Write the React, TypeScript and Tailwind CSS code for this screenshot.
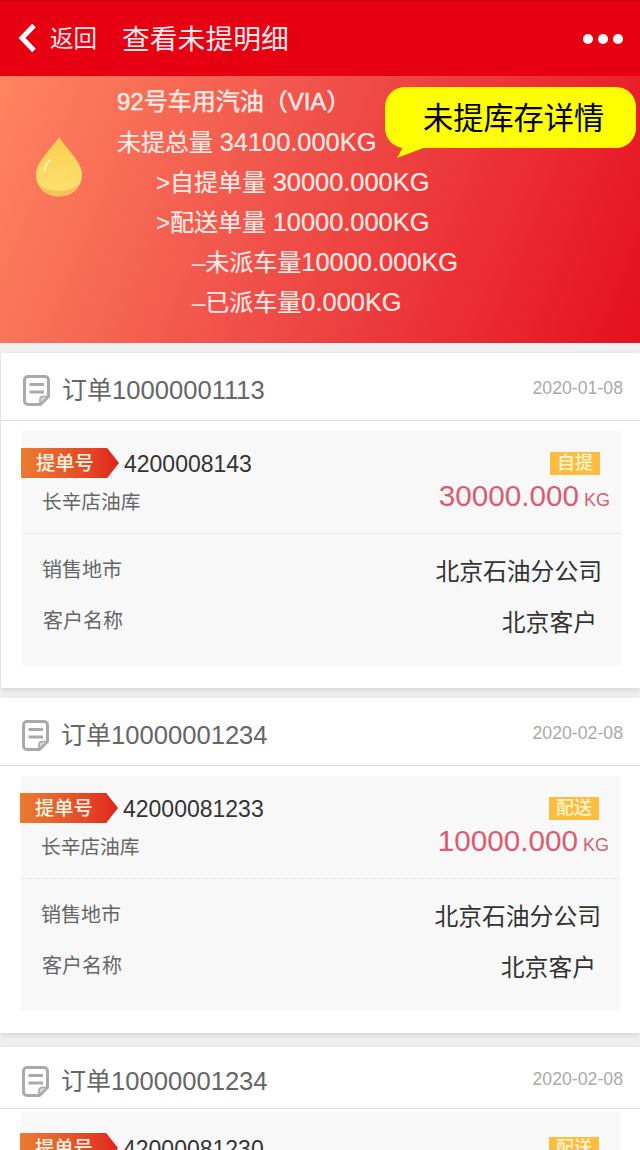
const sans = 'font-["Liberation_Sans","Noto_Sans_CJK_SC",sans-serif]'

type Order = {
  no: string
  date: string
  bill: string
  kind: string
  amount: string
  card: string
  head: string
  body: string
  billRow: string
  kindTop: string
}

const orders: Order[] = [
  {
    no: '10000001113',
    date: '2020-01-08',
    bill: '4200008143',
    kind: '自提',
    amount: '30000.000',
    card: 'ml-px mb-[10px]',
    head: 'h-[68px]',
    body: 'pt-[10px] pl-[21px]',
    billRow: 'pt-[17px]',
    kindTop: 'top-[21px]',
  },
  {
    no: '10000001234',
    date: '2020-02-08',
    bill: '42000081233',
    kind: '配送',
    amount: '10000.000',
    card: 'mb-[14px]',
    head: 'h-[68px]',
    body: 'pt-[10px] pl-[21px]',
    billRow: 'pt-[17px]',
    kindTop: 'top-[21px]',
  },
  {
    no: '10000001234',
    date: '2020-02-08',
    bill: '42000081230',
    kind: '配送',
    amount: '10000.000',
    card: '',
    head: 'h-[62px]',
    body: 'pt-[3px] pl-[21px]',
    billRow: 'pt-[21px]',
    kindTop: 'top-[25px]',
  },
]

function DocIcon() {
  return (
    <svg width="27" height="31" viewBox="0 0 27 31" fill="none">
      <path
        d="M5 1.500h17a3.500 3.500 0 0 1 3.500 3.500v16.500l-8 8H5A3.500 3.500 0 0 1 1.500 26V5A3.500 3.500 0 0 1 5 1.500z"
        stroke="#aaaaaa"
        strokeWidth="3"
        strokeLinejoin="round"
      />
      <path d="M6.500 9.500h14.500M6.500 17h14.500" stroke="#aaaaaa" strokeWidth="2.800" />
      <path d="M17 29v-4.500a3 3 0 0 1 3-3h5.500z" fill="#d8d8d8" stroke="#aaaaaa" strokeWidth="1.600" />
    </svg>
  )
}

function OilDrop() {
  return (
    <svg width="48" height="61" viewBox="0 0 48 61">
      <defs>
        <linearGradient id="drop" x1="0" y1="0" x2="0" y2="1">
          <stop offset="0" stopColor="#fbce4f" />
          <stop offset="1" stopColor="#fde26f" />
        </linearGradient>
      </defs>
      <path d="M24 1C20 9 1 25 1 38.500 1 51.500 11 60.500 24 60.500s23-9 23-22C47 25 28 9 24 1z" fill="url(#drop)" />
      <path d="M15 24c-3 3-5 7-6 11" stroke="#fff6cc" strokeWidth="1.500" fill="none" strokeLinecap="round" />
      <path d="M3 47c6 9 30 12 42 0-7 18-35 18-42 0z" fill="#f0a84c" opacity="0.55" />
    </svg>
  )
}

// digits in the hero run a little wider than the 24px chinese text next to them
function Num({ children }: { children: string }) {
  return <span className="text-[25.400px]">{children}</span>
}

function OrderCard({ order }: { order: Order }) {
  return (
    <div className={`bg-white shadow-[0_2px_6px_rgba(0,0,0,0.12)] ${order.card}`}>
      <div className={`${order.head} flex items-center justify-between border-b border-[#dedede] pt-[8px] pl-[22px] pr-[17px]`}>
        <div className="flex items-center gap-[12px]">
          <DocIcon />
          <span className="text-[25px] text-[#666] leading-none">
            订单<span className="text-[25.600px]">{order.no}</span>
          </span>
        </div>
        <span className="text-[17.700px] text-[#aaa] leading-none mb-[4px]">{order.date}</span>
      </div>
      <div className={`${order.body} pb-[22px]`}>
        <div className="bg-[#f8f8f8] h-[235px] w-[599px]">
          <div className="h-[103px] border-b border-dotted border-[#dcdcdc] relative">
            <div className={`flex items-center ${order.billRow}`}>
              <span className="h-[30px] w-[98px] pl-[15px] pt-[2px] text-[19.300px] font-medium leading-[28px] text-[#fff3e6] bg-gradient-to-r from-[#ea7b32] to-[#e0201f] [clip-path:polygon(0_0,88%_0,100%_50%,88%_100%,0_100%)] -ml-px">
                提单号
              </span>
              <span className="ml-[5px] text-[23px] text-[#333] leading-none mt-[3px]">{order.bill}</span>
            </div>
            <div className="pl-[20px] mt-[15px] text-[19.700px] leading-none text-[#666]">长辛店油库</div>
            <div className={`absolute right-[21px] ${order.kindTop} h-[23px] w-[50px] bg-[#fbbd3e] text-[#fff3d0] text-[18px] font-medium leading-[23px] text-center`}>
              {order.kind}
            </div>
            <div className="absolute right-[11px] top-[49px] flex items-baseline gap-[5px] text-[#dd5a70]">
              <span className="text-[29.700px] leading-[32px]">{order.amount}</span>
              <span className="text-[18px] leading-none">KG</span>
            </div>
          </div>
          <div className="flex items-center justify-between pl-[20px] pr-[19px] h-[50px] mt-[11px]">
            <span className="text-[20px] text-[#666]">销售地市</span>
            <span className="text-[23.800px] text-[#333] mt-[3px]">北京石油分公司</span>
          </div>
          <div className="flex items-center justify-between pl-[21px] pr-[24px] h-[50px]">
            <span className="text-[20px] text-[#666] mt-[2px]">客户名称</span>
            <span className="text-[23.800px] text-[#333] mt-[5px]">北京客户</span>
          </div>
        </div>
      </div>
    </div>
  )
}

export default function App() {
  return (
    <div className={`w-[640px] h-[1150px] overflow-hidden bg-[#f0f0f0] ${sans}`}>
      <div className="h-[76px] bg-[#e60012] border-t border-[#cc0010] flex items-center justify-between pl-[18px] pr-[17px] text-white">
        <div className="flex items-center">
          <svg width="19" height="30" viewBox="0 0 19 30" fill="none">
            <path d="M16 2.500 4 15l12 12.500" stroke="#fff" strokeWidth="5" strokeLinejoin="miter" />
          </svg>
          <span className="ml-[13px] text-[23.500px] leading-none text-[#fde8ea] mt-[3px]">返回</span>
          <span className="ml-[25px] text-[27.800px] leading-none text-[#fde8ea] mt-[3px]">查看未提明细</span>
        </div>
        <div className="flex gap-[5px]">
          <span className="w-[10px] h-[10px] rounded-full bg-white" />
          <span className="w-[10px] h-[10px] rounded-full bg-white" />
          <span className="w-[10px] h-[10px] rounded-full bg-white" />
        </div>
      </div>

      <div className="relative h-[267px] bg-[linear-gradient(112deg,#ff8560_0%,#f0504a_45%,#e60f20_100%)] flex text-[#ffe9e4] text-[24px]">
        <div className="w-[117px] shrink-0 flex justify-center items-start pt-[60px] pl-px">
          <OilDrop />
        </div>
        <div className="pt-[6px] [&>div]:h-[40px] [&>div]:leading-[40px] [-webkit-text-stroke:0.2px_#ffe9e4]">
          <div className="[-webkit-text-stroke:0.5px_#ffe9e4]">
            92号车用汽油（VIA）
          </div>
          <div>
            未提总量 <Num>34100.000KG</Num>
          </div>
          <div className="pl-[39px]">
            &gt;自提单量 <Num>30000.000KG</Num>
          </div>
          <div className="pl-[39px]">
            &gt;配送单量 <Num>10000.000KG</Num>
          </div>
          <div className="pl-[75px]">
            –未派车量<Num>10000.000KG</Num>
          </div>
          <div className="pl-[75px]">
            –已派车量<Num>0.000KG</Num>
          </div>
        </div>
        <div className="absolute left-[385px] top-[11px] w-[251px] h-[61px] rounded-[20px] bg-[#ffff00] text-black text-[30.200px] leading-[63px] pl-[38px]">
          未提库存详情
          <svg className="absolute left-[12px] top-[60px]" width="30" height="12" viewBox="0 0 30 12">
            <path d="M6 0 0 11 29 0z" fill="#ffff00" />
          </svg>
        </div>
      </div>

      <div className="pt-[10px]">
        {orders.map((order, i) => (
          <OrderCard key={i} order={order} />
        ))}
      </div>
    </div>
  )
}
